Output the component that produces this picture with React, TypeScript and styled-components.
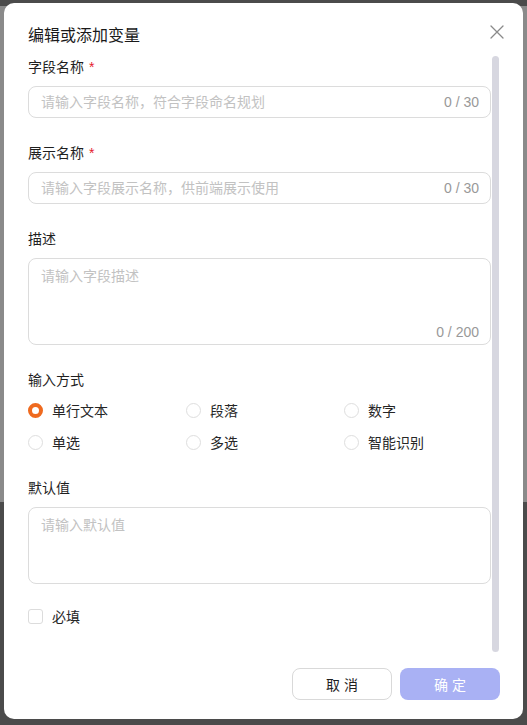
import React, { useState } from 'react';
import styled, { createGlobalStyle } from 'styled-components';

const GlobalStyle = createGlobalStyle`
  html, body {
    margin: 0;
    padding: 0;
    height: 100%;
  }
  body {
    background: #4b4b4b;
    font-family: "Liberation Sans", "Noto Sans CJK SC", sans-serif;
    -webkit-font-smoothing: antialiased;
  }
`;

const radioOptions = ['单行文本', '段落', '数字', '单选', '多选', '智能识别'];

const App = () => {
  const [mode, setMode] = useState('单行文本');
  const [required, setRequired] = useState(false);

  return (
    <>
      <GlobalStyle />
      <Page>
        <BehindPanel />
      </Page>

      <Modal>
        <Header>
          <Title>编辑或添加变量</Title>
          <CloseButton aria-label="close">
            <svg width="14" height="14" viewBox="0 0 14 14" fill="none">
              <path d="M1 1L13 13M13 1L1 13" stroke="#8a8a8a" strokeWidth="1.3" strokeLinecap="round" />
            </svg>
          </CloseButton>
        </Header>

        <Body>
          <Form>
            <FormItem>
              <Label>
                字段名称<Required>*</Required>
              </Label>
              <InputBox>
                <Placeholder>请输入字段名称，符合字段命名规划</Placeholder>
                <Counter>0 / 30</Counter>
              </InputBox>
            </FormItem>

            <FormItem>
              <Label>
                展示名称<Required>*</Required>
              </Label>
              <InputBox>
                <Placeholder>请输入字段展示名称，供前端展示使用</Placeholder>
                <Counter>0 / 30</Counter>
              </InputBox>
            </FormItem>

            <FormItem>
              <Label>描述</Label>
              <TextAreaBox $height={87}>
                <Placeholder>请输入字段描述</Placeholder>
                <AreaCounter>0 / 200</AreaCounter>
              </TextAreaBox>
            </FormItem>

            <FormItem>
              <Label>输入方式</Label>
              <RadioGrid>
                {radioOptions.map(opt => (
                  <RadioItem key={opt} onClick={() => setMode(opt)}>
                    <RadioCircle $checked={mode === opt} />
                    <RadioText>{opt}</RadioText>
                  </RadioItem>
                ))}
              </RadioGrid>
            </FormItem>

            <FormItem>
              <Label>默认值</Label>
              <TextAreaBox $height={77}>
                <Placeholder>请输入默认值</Placeholder>
              </TextAreaBox>
            </FormItem>

            <CheckRow onClick={() => setRequired(!required)}>
              <CheckBox $checked={required} />
              <CheckText>必填</CheckText>
            </CheckRow>
          </Form>
          <ScrollThumb />
        </Body>

        <Footer>
          <CancelButton>取 消</CancelButton>
          <ConfirmButton>确 定</ConfirmButton>
        </Footer>
      </Modal>
    </>
  );
};

const Page = styled.div`
  height: 725px;
  padding-top: 6px;
  box-sizing: border-box;
`;

const BehindPanel = styled.div`
  height: 496px;
  background: #8a8a8a;
`;

const Modal = styled.div`
  position: fixed;
  top: 3px;
  left: 4px;
  width: 519px;
  height: 716px;
  box-sizing: border-box;
  background: #fff;
  border-radius: 10px;
  padding: 21px 23px 19px 24px;
  display: flex;
  flex-direction: column;
`;

const Header = styled.div`
  display: flex;
  align-items: center;
  justify-content: space-between;
  height: 24px;
  margin-bottom: 8px;
`;

const Title = styled.h2`
  margin: 0;
  font-size: 16px;
  line-height: 24px;
  font-weight: 400;
  color: #1a1a1a;
`;

const CloseButton = styled.button`
  border: none;
  background: none;
  padding: 0;
  margin-right: -4px;
  margin-top: -8px;
  width: 14px;
  height: 14px;
  display: flex;
  cursor: pointer;
`;

const Body = styled.div`
  display: flex;
  gap: 1px;
  height: 596px;
`;

const Form = styled.div`
  width: 463px;
  display: flex;
  flex-direction: column;
`;

const ScrollThumb = styled.div`
  width: 7px;
  height: 596px;
  border-radius: 4px;
  background: #d7d7e0;
`;

const FormItem = styled.div`
  display: flex;
  flex-direction: column;
  gap: 8px;
  margin-bottom: 24px;
`;

const Label = styled.label`
  font-size: 14px;
  line-height: 22px;
  color: #1f1f1f;
`;

const Required = styled.span`
  color: #e5202d;
  margin-left: 5px;
`;

const InputBox = styled.div`
  height: 32px;
  box-sizing: border-box;
  border: 1px solid #dcdcdc;
  border-radius: 8px;
  padding: 0 11px 0 12px;
  display: flex;
  align-items: center;
  justify-content: space-between;
`;

const Placeholder = styled.span`
  font-size: 14px;
  line-height: 22px;
  color: #c2c2c2;
`;

const Counter = styled.span`
  font-size: 14px;
  line-height: 22px;
  color: #999;
`;

const TextAreaBox = styled.div<{ $height: number }>`
  height: ${props => props.$height}px;
  box-sizing: border-box;
  border: 1px solid #dcdcdc;
  border-radius: 8px;
  padding: 6px 11px 0 12px;
  display: flex;
  flex-direction: column;
  justify-content: space-between;
`;

const AreaCounter = styled(Counter)`
  align-self: flex-end;
  margin-bottom: 1px;
`;

const RadioGrid = styled.div`
  display: grid;
  grid-template-columns: repeat(3, 158px);
  row-gap: 10px;
`;

const RadioItem = styled.div`
  display: flex;
  align-items: center;
  gap: 9px;
  height: 22px;
  cursor: pointer;
`;

const RadioCircle = styled.span<{ $checked: boolean }>`
  width: 15px;
  height: 15px;
  box-sizing: border-box;
  border-radius: 50%;
  background: #fff;
  border: ${props => (props.$checked ? '4.5px solid #ef6a1f' : '1px solid #dedede')};
`;

const RadioText = styled.span`
  font-size: 14px;
  color: #262626;
`;

const CheckRow = styled.div`
  display: flex;
  align-items: center;
  gap: 9px;
  height: 16px;
  cursor: pointer;
`;

const CheckBox = styled.span<{ $checked: boolean }>`
  width: 15px;
  height: 15px;
  box-sizing: border-box;
  border-radius: 3px;
  border: 1px solid #dcdcdc;
  background: ${props => (props.$checked ? '#ef6a1f' : '#fff')};
`;

const CheckText = styled.span`
  font-size: 14px;
  color: #262626;
`;

const Footer = styled.div`
  display: flex;
  justify-content: flex-end;
  gap: 8px;
  margin-top: auto;
`;

const BaseButton = styled.button`
  width: 100px;
  height: 32px;
  border-radius: 8px;
  font-family: "Liberation Sans", "Noto Sans CJK SC", sans-serif;
  font-size: 14px;
  cursor: pointer;
`;

const CancelButton = styled(BaseButton)`
  background: #fff;
  border: 1px solid #d9d9d9;
  color: #1f1f1f;
`;

const ConfirmButton = styled(BaseButton)`
  background: #a9b1f4;
  border: none;
  color: #fff;
`;

export default App;
